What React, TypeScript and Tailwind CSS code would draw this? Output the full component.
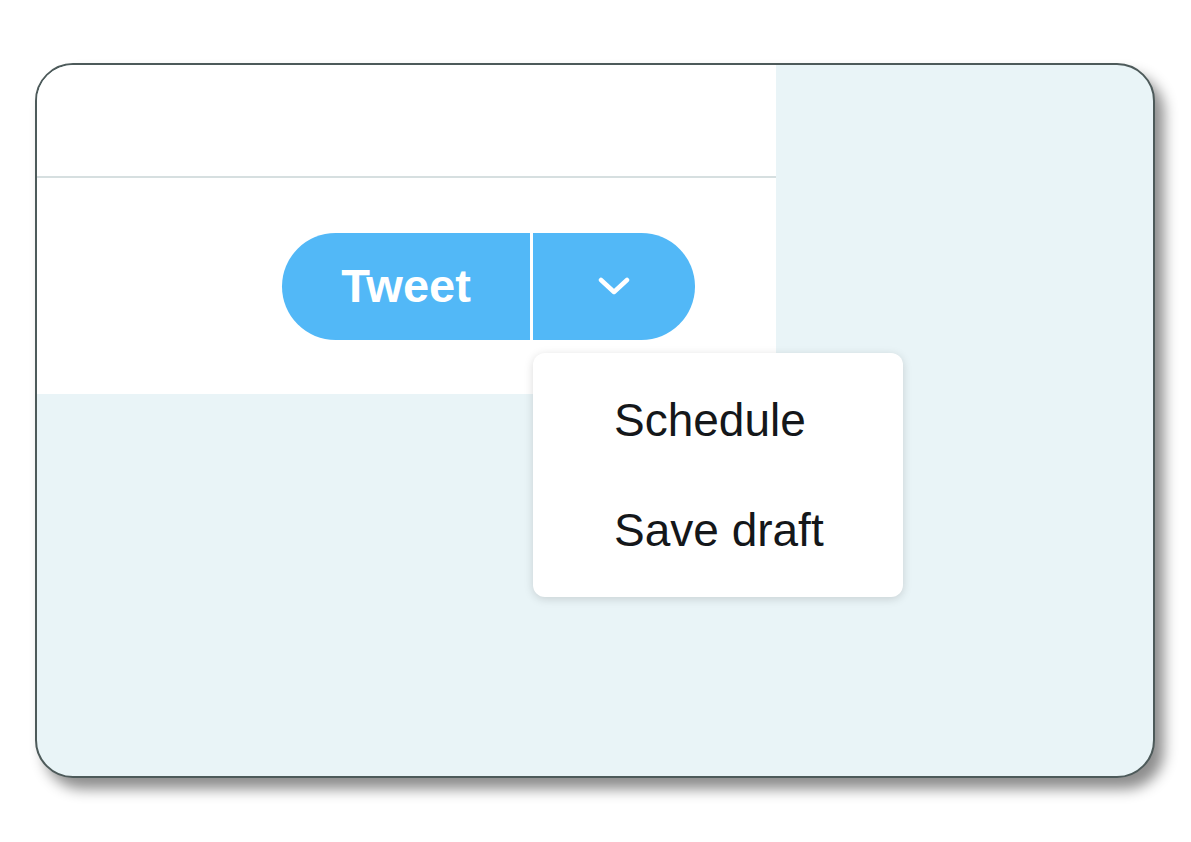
export default function App() {
  return (
    <div
      className="min-h-screen w-full bg-white pt-[63px] pl-[35px]"
      style={{ fontFamily: '"Liberation Sans", Arial, sans-serif' }}
    >
      <div className="relative h-[715px] w-[1120px] overflow-hidden rounded-[38px] border-2 border-[#4d5a5a] bg-[#e9f4f7] shadow-[9px_11px_14px_rgba(0,0,0,0.45)]">
        {/* composer panel */}
        <div className="flex h-[329px] w-[739px] flex-col bg-white">
          <div className="h-[111px]" />
          <div className="h-[2px] bg-[#d6dfe0]" />
          <div className="flex flex-1 items-center justify-end pr-[81px]">
            <div className="flex h-[107px] overflow-hidden rounded-full bg-[#52b8f7]">
              <button className="flex w-[248px] items-center justify-center text-[47px] font-bold text-white">
                Tweet
              </button>
              <div className="w-[3px] bg-white" />
              <button className="flex w-[162px] items-center justify-center">
                <svg width="32" height="18" viewBox="0 0 32 18" fill="none">
                  <polyline
                    points="3,3 16,15 29,3"
                    stroke="white"
                    strokeWidth="4.5"
                    strokeLinecap="round"
                    strokeLinejoin="round"
                  />
                </svg>
              </button>
            </div>
          </div>
        </div>

        {/* dropdown menu */}
        <div className="absolute left-[496px] top-[288px] w-[370px] rounded-xl bg-white py-[12px] shadow-[0_2px_10px_rgba(0,0,0,0.15)]">
          <div className="flex h-[110px] items-center pl-[81px] text-[46px] text-[#14171a]">
            Schedule
          </div>
          <div className="flex h-[110px] items-center pl-[81px] text-[46px] text-[#14171a]">
            Save draft
          </div>
        </div>
      </div>
    </div>
  );
}
